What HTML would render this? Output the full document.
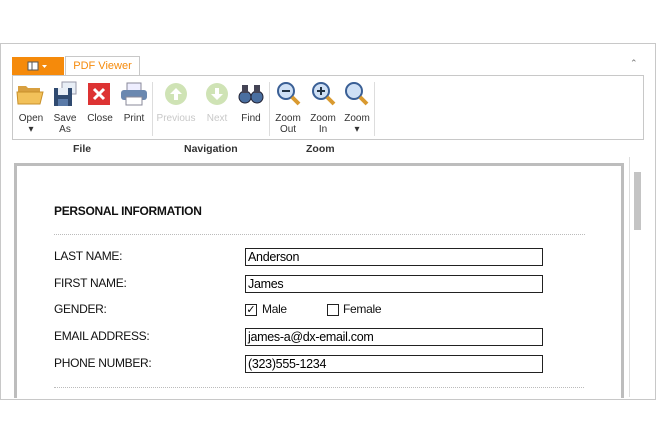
<html><head><style>
body{margin:0;width:656px;height:443px;background:#fff;position:relative;font-family:"Segoe UI","Liberation Sans",sans-serif;overflow:hidden}
.a{position:absolute}
.t{font-size:10px;color:#333;text-align:center;line-height:11px}
.g{font-size:10.5px;font-weight:bold;color:#333}
.l{font-family:"Liberation Sans",sans-serif;font-size:12px;color:#111;letter-spacing:-0.3px}
.f{border:1px solid #222;width:298px;left:245px;font-family:"Liberation Sans",sans-serif;font-size:12.5px;line-height:16px;padding-left:2px;box-sizing:border-box;height:18px;letter-spacing:-0.3px}
</style></head><body>
<div class="a" style="left:0;top:43px;width:654px;height:355px;border:1px solid #c8c8c8"></div>
<div class="a" style="left:12px;top:57px;width:52px;height:18px;background:#f58a0b"></div>
<svg class="a" style="left:27px;top:61px" width="24" height="10"><rect x="1" y="1" width="10" height="8" fill="#fff" stroke="#555"/><line x1="5" y1="1" x2="5" y2="9" stroke="#555"/><path d="M15 4h5l-2.5 3z" fill="#fff"/></svg>
<div class="a" style="left:65px;top:56px;width:73px;height:19px;border:1px solid #c8c8c8;border-bottom:none;background:#fff;color:#f58a0b;font-size:11px;text-align:center;line-height:19px">PDF Viewer</div>
<div class="a" style="left:630px;top:58px;font-size:9px;color:#777">&#8963;</div>
<div class="a" style="left:12px;top:75px;width:632px;height:65px;border:1px solid #c8c8c8;box-sizing:border-box"></div>
<div class="a" style="left:152px;top:82px;width:1px;height:54px;background:#ddd"></div>
<div class="a" style="left:269px;top:82px;width:1px;height:54px;background:#ddd"></div>
<div class="a" style="left:374px;top:82px;width:1px;height:54px;background:#ddd"></div>
<svg class="a" style="left:16px;top:82px" width="30" height="24"><path d="M2 4h8l2 2h12v4H2z" fill="#d8a040"/><path d="M1 10h26l-3 12H2z" fill="#f2c15a" stroke="#c8902a"/></svg>
<svg class="a" style="left:52px;top:81px" width="26" height="26"><rect x="10" y="1" width="14" height="12" fill="#e8eef6" stroke="#99a"/><rect x="2" y="7" width="18" height="18" fill="#304a70"/><rect x="6" y="7" width="10" height="7" fill="#e8eef6"/><rect x="6" y="18" width="10" height="7" fill="#5a7aa8"/></svg>
<svg class="a" style="left:87px;top:82px" width="24" height="24"><rect x="1" y="1" width="22" height="22" fill="#d33"/><path d="M7 7l10 10M17 7L7 17" stroke="#fff" stroke-width="3"/></svg>
<svg class="a" style="left:120px;top:82px" width="28" height="24"><rect x="7" y="1" width="14" height="8" fill="#eef" stroke="#889"/><rect x="1" y="8" width="26" height="10" rx="3" fill="#6a88b0"/><rect x="6" y="15" width="16" height="8" fill="#fff" stroke="#889"/></svg>
<svg class="a" style="left:164px;top:82px" width="24" height="24"><circle cx="12" cy="12" r="11" fill="#cfe3b5"/><path d="M12 6l-6 6h4v6h4v-6h4z" fill="#fff"/></svg>
<svg class="a" style="left:205px;top:82px" width="24" height="24"><circle cx="12" cy="12" r="11" fill="#cfe3b5"/><path d="M12 18l-6-6h4V6h4v6h4z" fill="#fff"/></svg>
<svg class="a" style="left:238px;top:82px" width="26" height="24"><circle cx="7" cy="15" r="6" fill="#4a6fa0" stroke="#223"/><circle cx="19" cy="15" r="6" fill="#4a6fa0" stroke="#223"/><rect x="4" y="3" width="6" height="8" fill="#445"/><rect x="16" y="3" width="6" height="8" fill="#445"/></svg>
<svg class="a" style="left:276px;top:81px" width="26" height="26"><circle cx="10" cy="10" r="8" fill="#cfe0f5" stroke="#3a5f95" stroke-width="2"/><path d="M16 16l7 7" stroke="#d99a30" stroke-width="4"/><path d="M6 10h8" stroke="#234" stroke-width="2"/></svg>
<svg class="a" style="left:311px;top:81px" width="26" height="26"><circle cx="10" cy="10" r="8" fill="#cfe0f5" stroke="#3a5f95" stroke-width="2"/><path d="M16 16l7 7" stroke="#d99a30" stroke-width="4"/><path d="M6 10h8M10 6v8" stroke="#234" stroke-width="2"/></svg>
<svg class="a" style="left:344px;top:81px" width="26" height="26"><circle cx="10" cy="10" r="8" fill="#cfe0f5" stroke="#3a5f95" stroke-width="2"/><path d="M16 16l7 7" stroke="#d99a30" stroke-width="4"/></svg>
<div class="a t" style="left:15px;top:113px;width:32px">Open<br>▾</div>
<div class="a t" style="left:50px;top:113px;width:30px">Save<br>As</div>
<div class="a t" style="left:84px;top:113px;width:32px">Close</div>
<div class="a t" style="left:118px;top:113px;width:32px">Print</div>
<div class="a t" style="left:154px;top:113px;width:44px;color:#c8c8c8">Previous</div>
<div class="a t" style="left:202px;top:113px;width:30px;color:#c8c8c8">Next</div>
<div class="a t" style="left:236px;top:113px;width:30px">Find</div>
<div class="a t" style="left:272px;top:113px;width:32px">Zoom<br>Out</div>
<div class="a t" style="left:307px;top:113px;width:32px">Zoom<br>In</div>
<div class="a t" style="left:341px;top:113px;width:32px">Zoom<br>▾</div>
<div class="a g" style="left:73px;top:143px">File</div>
<div class="a g" style="left:184px;top:143px">Navigation</div>
<div class="a g" style="left:306px;top:143px">Zoom</div>
<div class="a" style="left:14px;top:163px;width:610px;height:235px;border:3px solid #bdbdbd;border-bottom:none;box-sizing:border-box"></div>
<div class="a" style="left:629px;top:157px;width:1px;height:240px;background:#ddd"></div>
<div class="a" style="left:634px;top:172px;width:7px;height:58px;background:#c4c4c4"></div>
<div class="a l" style="left:54px;top:204px;font-weight:bold;font-size:12px">PERSONAL INFORMATION</div>
<div class="a" style="left:54px;top:234px;width:531px;border-top:1px dotted #bbb"></div>
<div class="a" style="left:54px;top:387px;width:530px;border-top:1px dotted #bbb"></div>
<div class="a l" style="left:54px;top:249px">LAST NAME:</div>
<div class="a l" style="left:54px;top:276px">FIRST NAME:</div>
<div class="a l" style="left:54px;top:302px">GENDER:</div>
<div class="a l" style="left:54px;top:329px">EMAIL ADDRESS:</div>
<div class="a l" style="left:54px;top:356px">PHONE NUMBER:</div>
<div class="a f" style="top:248px">Anderson</div>
<div class="a f" style="top:275px">James</div>
<div class="a f" style="top:328px">james-a@dx-email.com</div>
<div class="a f" style="top:355px">(323)555-1234</div>
<div class="a" style="left:245px;top:304px;width:10px;height:10px;border:1px solid #222;font-size:11px;line-height:10px;text-align:center">✓</div>
<div class="a l" style="left:262px;top:302px">Male</div>
<div class="a" style="left:327px;top:304px;width:10px;height:10px;border:1px solid #222"></div>
<div class="a l" style="left:343px;top:302px">Female</div>
</body></html>
